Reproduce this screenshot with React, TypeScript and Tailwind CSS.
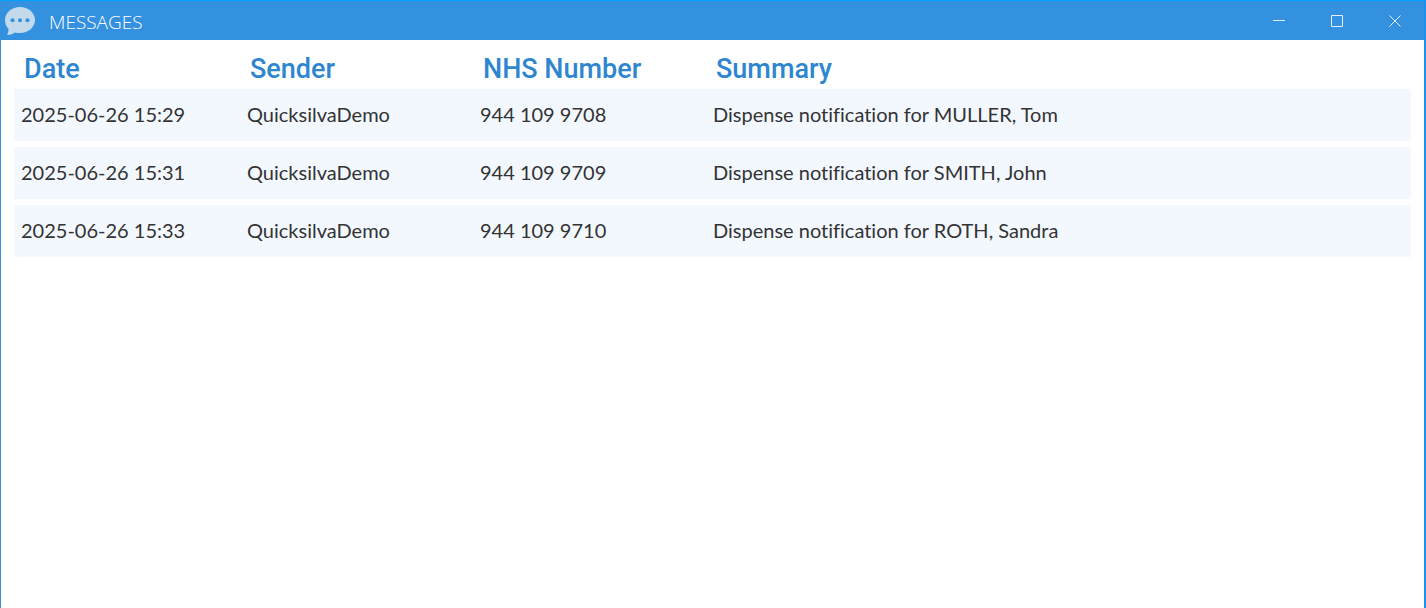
import type { ReactNode } from 'react';

interface Message {
  id: number;
  date: string;
  sender: string;
  nhsNumber: string;
  summary: string;
}

const MESSAGES: Message[] = [
  {
    id: 1,
    date: '2025-06-26 15:29',
    sender: 'QuicksilvaDemo',
    nhsNumber: '944 109 9708',
    summary: 'Dispense notification for MULLER, Tom'
  },
  {
    id: 2,
    date: '2025-06-26 15:31',
    sender: 'QuicksilvaDemo',
    nhsNumber: '944 109 9709',
    summary: 'Dispense notification for SMITH, John'
  },
  {
    id: 3,
    date: '2025-06-26 15:33',
    sender: 'QuicksilvaDemo',
    nhsNumber: '944 109 9710',
    summary: 'Dispense notification for ROTH, Sandra'
  }
];

const COLUMNS = [
  { label: 'Date', width: 'w-[226px]' },
  { label: 'Sender', width: 'w-[233px]' },
  { label: 'NHS Number', width: 'w-[233px]' },
  { label: 'Summary', width: '' }
];

const MessageIcon = () => (
  <svg width="30" height="28" viewBox="0 0 30 28" aria-hidden="true">
    <path
      d="M15 0C6.700 0 0 5.800 0 13c0 3.600 1.300 6.600 3.600 9-.1 2-.5 4-1.400 6 3.200-.2 5.600-1 7.800-2.500 1.600.4 3.200.5 5 .5 8.300 0 15-5.800 15-13S23.300 0 15 0Z"
      fill="#c3d9ec"
    />
    <circle cx="7.500" cy="13.200" r="2" fill="#3391e0" />
    <circle cx="15" cy="13.200" r="2" fill="#3391e0" />
    <circle cx="22.500" cy="13.200" r="2" fill="#3391e0" />
  </svg>
);

const WindowButton = ({ label, children }: { label: string; children: ReactNode }) => (
  <button
    type="button"
    aria-label={label}
    className="flex h-full w-[58px] items-center justify-center hover:bg-white/20"
  >
    <svg width="12" height="12" viewBox="0 0 12 12" fill="none" stroke="#e4effa" aria-hidden="true">
      {children}
    </svg>
  </button>
);

const TitleBar = () => (
  <header className="flex h-10 items-center justify-between border-t border-[#00a2ff] bg-[#3391e0] pl-1">
    <div className="flex items-center gap-3.5">
      <MessageIcon />
      <h1 className="pt-0.5 font-['Open_Sans',sans-serif] text-[19px] leading-6 font-light text-white">
        MESSAGES
      </h1>
    </div>
    <div className="flex h-full">
      <WindowButton label="Minimize">
        <path d="M0 5.500h12" />
      </WindowButton>
      <WindowButton label="Maximize">
        <path d="M.5.5h11v11H.5z" />
      </WindowButton>
      <WindowButton label="Close">
        <path d="m.5.5 11 11M11.500.5l-11 11" />
      </WindowButton>
    </div>
  </header>
);

const MessageTable = ({ messages }: { messages: Message[] }) => (
  <table className="w-full table-fixed border-separate border-spacing-x-0 border-spacing-y-1.5 text-left">
    <thead>
      <tr className="h-[37px]">
        {COLUMNS.map(({ label, width }) => (
          <th
            key={label}
            scope="col"
            className={`${width} px-2.5 pt-2 pb-0 font-['Roboto',sans-serif] text-[27px] leading-7 font-medium text-[#2f86d0]`}
          >
            {label}
          </th>
        ))}
      </tr>
    </thead>
    <tbody className="font-['Lato',sans-serif] text-xl text-[#333333] [font-variant-ligatures:none]">
      {messages.map((message) => (
        <tr key={message.id} className="h-[52px] bg-[#f3f8ff]">
          <td className="px-[7px] pt-0 pb-0.5">{message.date}</td>
          <td className="px-[7px] pt-0 pb-0.5">{message.sender}</td>
          <td className="px-[7px] pt-0 pb-0.5">{message.nhsNumber}</td>
          <td className="px-[7px] pt-0 pb-0.5">{message.summary}</td>
        </tr>
      ))}
    </tbody>
  </table>
);

export default function App() {
  return (
    <div className="flex min-h-screen flex-col border-r-2 border-l border-r-[#1e90ec] border-l-[#3391e0] bg-white">
      <TitleBar />
      <main className="flex-1 px-[13px]">
        <MessageTable messages={MESSAGES} />
      </main>
    </div>
  );
}
